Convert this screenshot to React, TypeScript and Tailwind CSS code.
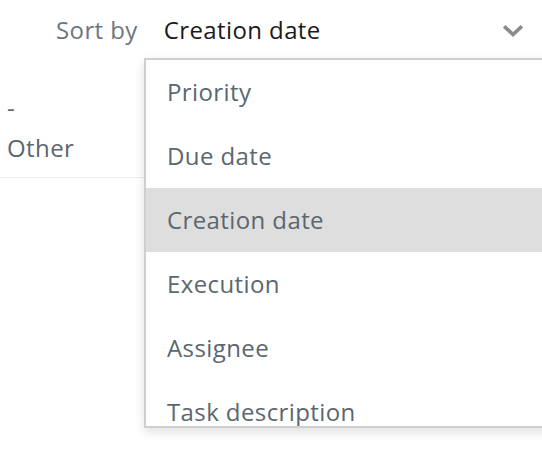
const options = ["Priority", "Due date", "Creation date", "Execution", "Assignee", "Task description"];

export default function App() {
  const selected = "Creation date";
  return (
    <div className="relative w-[542px] h-[466px] overflow-hidden bg-white font-['Open_Sans','Noto_Sans',sans-serif] text-[24px] tracking-[0.4px]">
      <div className="flex items-center h-[60px] pl-[56px] pr-[19px]">
        <span className="text-[#6b7780]">Sort by</span>
        <span className="ml-[26px] text-[#1a1a1a]">{selected}</span>
        <svg className="ml-auto mt-[1px]" width="20" height="12" viewBox="0 0 20 12" fill="none">
          <polyline points="2.5,2.5 10,9.5 17.5,2.5" stroke="#8c8c8c" strokeWidth="3.6" strokeLinecap="square" />
        </svg>
      </div>

      <div className="w-[145px] border-b border-[#efefef] pt-[28px] pb-[9px] pl-[7px] text-[#5b6770] leading-[40px]">
        <div>-</div>
        <div>Other</div>
      </div>

      <div className="absolute left-[144px] top-[58px] w-[420px] h-[370px] overflow-hidden bg-white border-2 border-[#cfcfcf] shadow-[0_4px_10px_rgba(0,0,0,0.12)]">
        {options.map((opt) => (
          <div
            key={opt}
            className={`h-[64px] flex items-center pl-[21px] text-[#5b6770] ${opt === selected ? "bg-[#dedede]" : ""}`}
          >
            {opt}
          </div>
        ))}
      </div>
    </div>
  );
}
